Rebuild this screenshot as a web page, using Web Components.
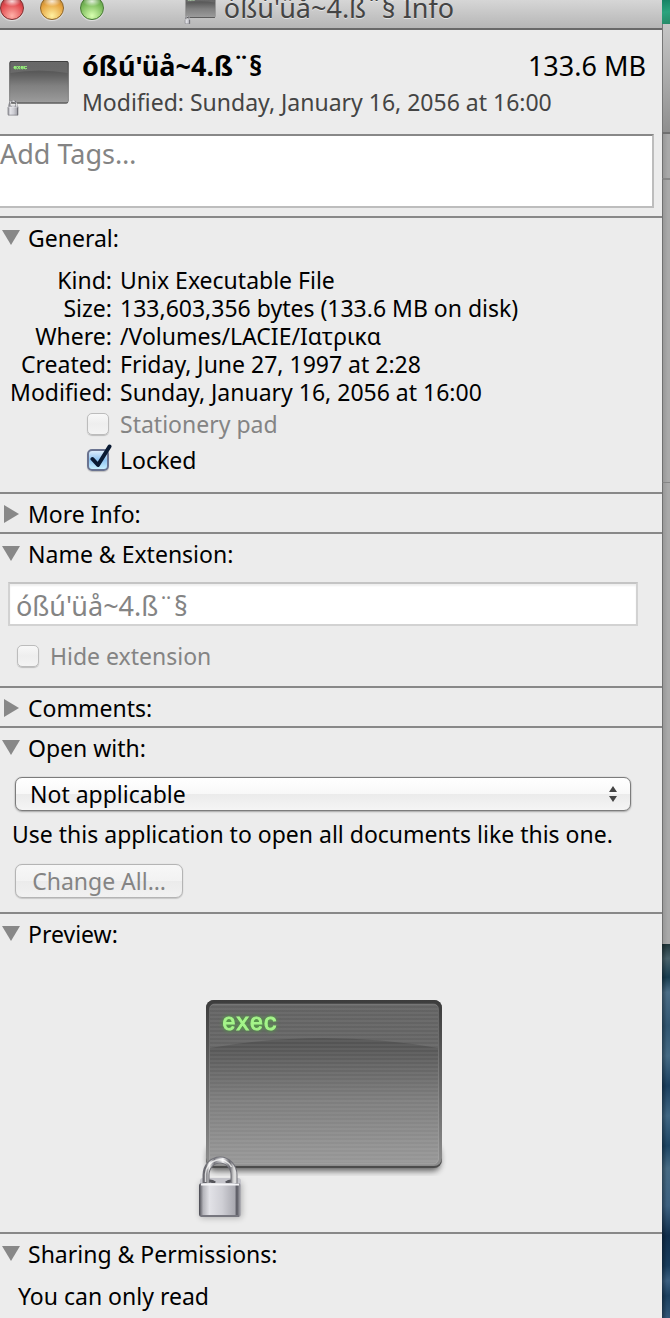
<!DOCTYPE html>
<html lang="en">
<head>
<meta charset="utf-8">
<title>File Info</title>
<style>
  body {
    margin: 0;
    min-height: 100vh;
    font-family: "Noto Sans", "Open Sans", sans-serif;
    font-size: 23px;
    line-height: 28px;
    color: #000;
    background: #ececec;
    overflow-x: hidden;
    --large: 27px;
    --rule: #888;
    --dim: #848484;
  }
</style>
</head>
<body>
<info-page></info-page>
<script>
const define = (name, html, setup) => {
  const template = document.createElement('template');
  template.innerHTML = html;
  customElements.define(name, class extends HTMLElement {
    constructor() {
      super();
      this.attachShadow({ mode: 'open' }).append(template.content.cloneNode(true));
    }
    connectedCallback() { if (setup) setup(this, this.shadowRoot); }
  });
};

define('exec-icon', `
  <style>
    :host { display: block; width: 64px; flex: none; }
    svg { display: block; width: 100%; height: auto; overflow: visible; }
    text { font: 23px "Liberation Mono", monospace; fill: #a5f58a; stroke: #a5f58a; stroke-width: 1; filter: drop-shadow(0 0 2px #4caf3a); }
  </style>
  <svg viewBox="0 0 256 224" aria-hidden="true">
    <defs>
      <linearGradient id="frame" x2="0" y2="1"><stop stop-color="#3c3c3c"/><stop offset=".3" stop-color="#555"/><stop offset="1" stop-color="#8d8d8d"/></linearGradient>
      <linearGradient id="screen" x2="0" y2="1"><stop stop-color="#575757"/><stop offset=".25" stop-color="#545454"/><stop offset=".6" stop-color="#7d7d7d"/><stop offset="1" stop-color="#989898"/></linearGradient>
      <linearGradient id="gloss" x2="0" y2="1"><stop stop-color="#fff" stop-opacity=".07"/><stop offset="1" stop-color="#fff" stop-opacity=".1"/></linearGradient>
      <linearGradient id="body"><stop stop-color="#45454d"/><stop offset=".1" stop-color="#b5b5bb"/><stop offset=".25" stop-color="#e2e2e7"/><stop offset=".55" stop-color="#cfcfd5"/><stop offset=".85" stop-color="#aaaab1"/><stop offset=".9" stop-color="#55555d"/><stop offset="1" stop-color="#b5b5bb"/></linearGradient>
      <linearGradient id="steel"><stop stop-color="#66666c"/><stop offset=".12" stop-color="#eee"/><stop offset=".3" stop-color="#77777d"/><stop offset=".6" stop-color="#f2f2f4"/><stop offset=".85" stop-color="#66666c"/><stop offset="1" stop-color="#ddd"/></linearGradient>
      <pattern id="lines" width="4" height="4" patternUnits="userSpaceOnUse"><rect width="4" height="2" fill="#fff" fill-opacity=".05"/></pattern>
      <filter id="soft" x="-20%" y="-20%" width="140%" height="140%"><feGaussianBlur stdDeviation="3"/></filter>
    </defs>
    <rect x="16" y="150" width="232" height="25" rx="7" fill="#000" opacity=".6" filter="url(#soft)"/>
    <rect x="14" y="4" width="236" height="168" rx="8" fill="#4c4c4c"/>
    <rect x="14" y="4" width="236" height="166" rx="8" fill="url(#frame)"/>
    <rect x="17.500" y="8" width="229" height="160" rx="5" fill="url(#screen)" stroke="#fff" stroke-opacity=".16"/>
    <rect x="18" y="8" width="228" height="160" rx="5" fill="url(#lines)"/>
    <path d="M18 13q0-5 5-5h218q5 0 5 5v39Q132 32 18 52z" fill="url(#gloss)"/>
    <text x="30" y="34">exec</text>
    <rect x="8" y="186" width="42" height="36" rx="3" fill="#000" opacity=".25" filter="url(#soft)"/>
    <rect x="8" y="182" width="41" height="18" rx="3" fill="#c4c4ca"/>
    <path d="M13 187q5-4 10 0M34 187q5-4 10 0" fill="none" stroke="#55555b" stroke-width="3"/>
    <path d="M14 187v-8a14 15 0 0 1 28 0v8" fill="none" stroke="#707077" stroke-width="7"/>
    <path d="M14 187v-8a14 15 0 0 1 28 0v8" fill="none" stroke="url(#steel)" stroke-width="5"/>
    <path d="M13.500 186v-8a14 15 0 0 1 26-7" fill="none" stroke="#fff" stroke-opacity=".75" stroke-width="1.500"/>
    <rect x="7" y="187" width="42" height="34" rx="3" fill="url(#body)"/>
    <path d="M9 188.500h38" stroke="#f5f5f7" stroke-width="2"/>
    <path d="M9 220h38" stroke="#77777f" stroke-width="2"/>
  </svg>`);

define('traffic-lights', `
  <style>
    :host { display: flex; gap: 16px; }
    button { width: 24px; height: 24px; padding: 0; border: 1px solid var(--edge); border-radius: 50%;
      background: radial-gradient(ellipse 9px 5px at 50% 20%, #fffc, #fff0), radial-gradient(circle at 50% 85%, var(--light) 0, var(--tone) 60%, var(--edge) 105%);
      box-shadow: 0 1px 1px #fff9; }
    .close { --edge: #7d2f30; --tone: #e0484c; --light: #ffb0a8; }
    .minimise { --edge: #8c6428; --tone: #e5a23e; --light: #fff0a0; }
    .zoom { --edge: #477a34; --tone: #78b858; --light: #d8ffb0; }
  </style>
  <button class="close" aria-label="Close"></button>
  <button class="minimise" aria-label="Minimise"></button>
  <button class="zoom" aria-label="Zoom"></button>`);

define('title-bar', `
  <style>
    :host { display: grid; grid-template-columns: 104px 1fr 128px; align-items: center; height: 40px; margin-top: -12px;
      border-bottom: 2px solid #696969; background: linear-gradient(#dedede, #d6d6d6 30%, #b6b6b6); }
    .title { display: flex; align-items: center; justify-content: center; gap: 8px; color: #444; font-size: var(--large); line-height: 36px; white-space: nowrap; text-shadow: 0 1px 0 #fff8; }
    exec-icon { width: 32px; padding-top: 4px; }
  </style>
  <traffic-lights></traffic-lights>
  <div class="title"><exec-icon></exec-icon><slot></slot></div>`);

define('file-header', `
  <style>
    :host { display: flex; align-items: flex-end; gap: 12px; padding: 18px 16px 18px 6px; }
    .text { flex: 1; display: grid; gap: 4px; }
    .top { display: flex; justify-content: space-between; font-size: var(--large); line-height: 36px; }
    .top ::slotted([slot=name]) { font-weight: bold; }
    .sub { color: #444; }
  </style>
  <exec-icon></exec-icon>
  <div class="text">
    <div class="top"><slot name="name"></slot><slot name="size"></slot></div>
    <div class="sub"><slot></slot></div>
  </div>`);

define('tag-field', `
  <style>
    :host { display: block; padding: 0 8px 8px 0; }
    textarea { display: block; box-sizing: border-box; width: 100%; height: 74px; padding: 0; resize: none; outline: 0; border: solid #bdbdbd;
      border-width: 2px 2px 2px 0; border-top-color: var(--rule); border-radius: 0; background: #fff; color: #000;
      font: inherit; font-size: var(--large); line-height: 36px; }
    textarea::placeholder { color: var(--dim); opacity: 1; }
  </style>
  <textarea aria-label="Tags" placeholder="Add Tags…"></textarea>`);

define('info-section', `
  <style>
    :host { display: block; border-top: 2px solid var(--rule); padding: 6px 0 4px; }
    :host([open]) { padding-bottom: var(--end, 16px); }
    button { display: flex; align-items: center; gap: 8px; padding: 0; border: 0; background: none; color: inherit; font: inherit; }
    svg { width: 20px; height: 18px; fill: var(--rule); }
    .shut, :host([open]) .open { display: block; }
    .open, :host([open]) .shut { display: none; }
    .body { display: none; padding-top: 14px; }
    :host([open]) .body { display: block; }
  </style>
  <button>
    <svg class="open" viewBox="0 0 20 18"><path d="M2 1h18l-9 15z"/></svg>
    <svg class="shut" viewBox="0 0 20 18"><path d="M4 0l15 9-15 9z"/></svg>
    <slot name="heading"></slot>
  </button>
  <div class="body"><slot></slot></div>`, (host, root) => {
    const button = root.querySelector('button');
    button.setAttribute('aria-expanded', host.hasAttribute('open'));
    button.onclick = () => button.setAttribute('aria-expanded', host.toggleAttribute('open'));
  });

define('info-row', `
  <style>
    :host { display: grid; grid-template-columns: 112px 1fr; gap: 8px; white-space: nowrap; }
    .label { text-align: right; }
  </style>
  <span class="label"><slot name="label"></slot></span><span><slot></slot></span>`);

define('check-option', `
  <style>
    :host { display: block; }
    label { display: flex; align-items: center; gap: 11px; }
    label.off { color: var(--dim); }
    .box { position: relative; display: block; width: 22px; height: 22px; }
    input { display: block; appearance: none; box-sizing: border-box; width: 22px; height: 22px; margin: 0; border: 1px solid #999; border-radius: 5px;
      background: linear-gradient(#fff, #f0f0f0 50%, #f8f8f8); box-shadow: 0 1px 1px #0003; }
    input:disabled { border-color: #bcbcbc; background: linear-gradient(#f8f8f8, #eee 50%, #f4f4f4); }
    input:checked { border: 2px solid #6a7390; background: linear-gradient(#dcecfb, #8fc3f1 50%, #c8efff); }
    svg { position: absolute; left: 0; top: -5px; width: 26px; height: 27px; pointer-events: none; display: none; }
    input:checked + svg { display: block; }
  </style>
  <label><span class="box"><input type="checkbox"><svg viewBox="0 0 26 27"><path d="M5.500 15l5.500 6L22.500 2.500" fill="none" stroke="#0a1a33" stroke-width="4" stroke-linecap="round" stroke-linejoin="round"/></svg></span><slot></slot></label>`,
  (host, root) => {
    const input = root.querySelector('input');
    input.checked = host.hasAttribute('checked');
    input.disabled = host.hasAttribute('disabled');
    root.querySelector('label').classList.toggle('off', input.disabled);
  });

define('name-field', `
  <style>
    :host { display: block; padding: 0 24px 0 8px; }
    input { display: block; box-sizing: border-box; width: 100%; height: 44px; padding: 2px 6px 0; border: 2px solid #d2d2d2; border-top-color: #c4c4c4;
      background: #fff; color: var(--dim); font: inherit; font-size: var(--large); box-shadow: inset 0 2px 2px #0001; }
  </style>
  <input type="text" aria-label="File name" disabled>`, (host, root) => { root.querySelector('input').value = host.getAttribute('value'); });

define('app-select', `
  <style>
    :host { display: block; position: relative; }
    select { display: block; appearance: none; box-sizing: border-box; width: 100%; height: 34px; padding: 0 14px; border: 1px solid #7c7c7c; border-radius: 7px;
      background: linear-gradient(#fff, #f8f8f8 50%, #ebebeb 51%, #f5f5f5); box-shadow: 0 0 1px #0006, 0 1px 2px #0004; color: inherit; font: inherit; }
    svg { position: absolute; right: 13px; top: 8px; width: 10px; height: 18px; fill: #444; pointer-events: none; }
  </style>
  <select aria-label="Open with"><option>Not applicable</option></select>
  <svg viewBox="0 0 10 18"><path d="M1 7l4-6 4 6zM1 11h8l-4 6z"/></svg>`);

define('push-button', `
  <style>
    :host { display: block; }
    button { display: block; box-sizing: border-box; min-width: 168px; height: 34px; padding: 0 8px; border: 1px solid #b4b4b4; border-radius: 7px; text-align: center; white-space: nowrap;
      background: linear-gradient(#f7f7f7, #f2f2f2 50%, #ebebeb 51%, #f1f1f1); box-shadow: 0 0 1px #0003, 0 1px 1px #0002; color: var(--dim); font: inherit; line-height: 28px; }
  </style>
  <button disabled><slot></slot></button>`);

define('desktop-edge', `
  <style>
    :host { display: flex; flex-direction: column; }
    .leaf { height: 24px; background: linear-gradient(170deg, #168264, #2ba37d 50%, #278a68); }
    .bar { height: 108px; background: linear-gradient(#c6c6c6, #8f8f8f); border-left: 1px solid #777; }
    .pane { height: 44px; border-top: 2px solid #707070; }
    .list { height: 302px; border-top: 2px solid #868686; }
    .rest { height: 461px; border-top: 1px solid #858585; }
    .pane, .list, .rest { border-left: 1px solid #707070; background: linear-gradient(90deg, #989898, #a9a9a9 70%); }
    .sea { flex: 1; background: linear-gradient(90deg, #0005, #0000 60%),
      linear-gradient(175deg, #1e3438 0, #48616a 4%, #173c50 9%, #4b6d87 13%, #315671 22%, #456a84 30%, #1b4060 38%, #416783 46%, #1d4564 54%, #476b84 60%, #3d6180 70%, #102e4c 78%, #183c5c 86%, #3b5f80 90%, #1c4060 94%, #335777 100%); }
  </style>
  <div class="leaf"></div><div class="bar"></div><div class="pane"></div><div class="list"></div><div class="rest"></div><div class="sea"></div>`);

define('info-page', `
  <style>
    :host { display: grid; grid-template-columns: minmax(0, 1fr) 8px; min-height: 100vh; overflow: hidden; }
    main { min-width: 0; background: #ececec; }
    .checks { display: grid; gap: 8px; padding: 4px 0 2px 87px; }
    .hide { padding: 16px 0 0 17px; }
    .open-with { display: grid; gap: 9px; padding: 1px 31px 0 0; }
    .open-with app-select, .open-with push-button { margin-left: 15px; }
    .open-with push-button { margin-top: 7px; }
    p { margin: 0; padding-left: 12px; white-space: nowrap; }
    .preview { display: flex; justify-content: center; padding: 34px 22px 0 0; }
    .preview exec-icon { width: 256px; }
    .access { padding-left: 18px; }
    .apps { --end: 14px; }
    .picture { --end: 12px; }
    .last { --end: 8px; }
  </style>
  <main>
    <title-bar>óßú'üå~4.ß¨§ Info</title-bar>
    <file-header><span slot="name">óßú'üå~4.ß¨§</span><span slot="size">133.6 MB</span>Modified: Sunday, January 16, 2056 at 16:00</file-header>
    <tag-field></tag-field>
    <info-section open><span slot="heading">General:</span>
      <info-row><span slot="label">Kind:</span>Unix Executable File</info-row>
      <info-row><span slot="label">Size:</span>133,603,356 bytes (133.6 MB on disk)</info-row>
      <info-row><span slot="label">Where:</span>/Volumes/LACIE/Ιατρικα</info-row>
      <info-row><span slot="label">Created:</span>Friday, June 27, 1997 at 2:28</info-row>
      <info-row><span slot="label">Modified:</span>Sunday, January 16, 2056 at 16:00</info-row>
      <div class="checks">
        <check-option disabled>Stationery pad</check-option>
        <check-option checked>Locked</check-option>
      </div>
    </info-section>
    <info-section><span slot="heading">More Info:</span></info-section>
    <info-section open><span slot="heading">Name &amp; Extension:</span>
      <name-field value="óßú'üå~4.ß¨§"></name-field>
      <div class="hide"><check-option disabled>Hide extension</check-option></div>
    </info-section>
    <info-section><span slot="heading">Comments:</span></info-section>
    <info-section open class="apps"><span slot="heading">Open with:</span>
      <div class="open-with">
        <app-select></app-select>
        <p>Use this application to open all documents like this one.</p>
        <push-button>Change All…</push-button>
      </div>
    </info-section>
    <info-section open class="picture"><span slot="heading">Preview:</span>
      <div class="preview"><exec-icon></exec-icon></div>
    </info-section>
    <info-section open class="last"><span slot="heading">Sharing &amp; Permissions:</span>
      <p class="access">You can only read</p>
    </info-section>
  </main>
  <desktop-edge></desktop-edge>`);
</script>
</body>
</html>
